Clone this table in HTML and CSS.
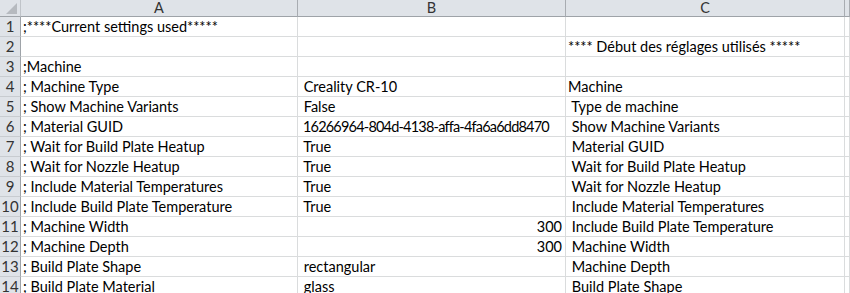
FILE: index.html
```html
<!DOCTYPE html>
<html>
<head>
    <title>Cura settings.xlsx</title>
    <meta charset="utf-8">
    <link rel="stylesheet" href="styles.css">
</head>
<body>
    <div class="sheet">
        <!-- column headers -->
        <div class="corner"><span class="select-all"></span></div>
        <div class="col-head">A</div>
        <div class="col-head">B</div>
        <div class="col-head">C</div>
        <div class="col-head"></div>

        <div class="row-head">1</div>
        <div class="cell">;****Current settings used*****</div>
        <div class="cell"></div>
        <div class="cell"></div>
        <div class="cell"></div>

        <div class="row-head">2</div>
        <div class="cell"></div>
        <div class="cell"></div>
        <div class="cell">**** Début des réglages utilisés *****</div>
        <div class="cell"></div>

        <div class="row-head">3</div>
        <div class="cell">;Machine</div>
        <div class="cell"></div>
        <div class="cell"></div>
        <div class="cell"></div>

        <div class="row-head">4</div>
        <div class="cell">; Machine Type</div>
        <div class="cell"> Creality CR-10</div>
        <div class="cell">Machine</div>
        <div class="cell"></div>

        <div class="row-head">5</div>
        <div class="cell">; Show Machine Variants</div>
        <div class="cell"> False</div>
        <div class="cell"> Type de machine</div>
        <div class="cell"></div>

        <div class="row-head">6</div>
        <div class="cell">; Material GUID</div>
        <div class="cell guid"> 16266964-804d-4138-affa-4fa6a6dd8470</div>
        <div class="cell"> Show Machine Variants</div>
        <div class="cell"></div>

        <div class="row-head">7</div>
        <div class="cell">; Wait for Build Plate Heatup</div>
        <div class="cell"> True</div>
        <div class="cell"> Material GUID</div>
        <div class="cell"></div>

        <div class="row-head">8</div>
        <div class="cell">; Wait for Nozzle Heatup</div>
        <div class="cell"> True</div>
        <div class="cell"> Wait for Build Plate Heatup</div>
        <div class="cell"></div>

        <div class="row-head">9</div>
        <div class="cell">; Include Material Temperatures</div>
        <div class="cell"> True</div>
        <div class="cell"> Wait for Nozzle Heatup</div>
        <div class="cell"></div>

        <div class="row-head">10</div>
        <div class="cell">; Include Build Plate Temperature</div>
        <div class="cell"> True</div>
        <div class="cell"> Include Material Temperatures</div>
        <div class="cell"></div>

        <div class="row-head">11</div>
        <div class="cell">; Machine Width</div>
        <div class="cell num">300</div>
        <div class="cell"> Include Build Plate Temperature</div>
        <div class="cell"></div>

        <div class="row-head">12</div>
        <div class="cell">; Machine Depth</div>
        <div class="cell num">300</div>
        <div class="cell"> Machine Width</div>
        <div class="cell"></div>

        <div class="row-head">13</div>
        <div class="cell">; Build Plate Shape</div>
        <div class="cell"> rectangular</div>
        <div class="cell"> Machine Depth</div>
        <div class="cell"></div>

        <div class="row-head">14</div>
        <div class="cell">; Build Plate Material</div>
        <div class="cell"> glass</div>
        <div class="cell"> Build Plate Shape</div>
        <div class="cell"></div>
    </div>
</body>
</html>
```

FILE: styles.css
```css
html, body {
    height: 100%;
    margin: 0;
    padding: 0;
    overflow: hidden;
    background: #ffffff;
}

.sheet {
    display: grid;
    grid-template-columns: 21px 277px 268px 279px 1fr;
    grid-auto-rows: 20px;
    grid-template-rows: 17px;
    font-family: 'Lato', 'Open Sans', sans-serif;
    font-size: 14.5px;
    color: #000000;
}

.corner, .col-head, .row-head {
    box-sizing: border-box;
    background: #dfe3e8;
    color: #333333;
    border-right: 1px solid #c0c4c9;
    border-bottom: 1px solid #c0c4c9;
}

.corner {
    position: relative;
    border-bottom-color: #9ea3a8;
}

/* grey triangle for select-all */
.select-all {
    position: absolute;
    right: 3px;
    bottom: 2px;
    width: 0;
    height: 0;
    border-left: 11px solid transparent;
    border-bottom: 11px solid #b6babf;
}

.col-head {
    text-align: center;
    line-height: 16px;
    font-size: 14.5px;
    border-bottom-color: #9ea3a8;
    border-right-color: #a8acb1;
}

.row-head {
    text-align: center;
    line-height: 19px;
    font-size: 15px;
    border-right-color: #9ea3a8;
    border-bottom-color: #c8ccd0;
}

.cell {
    box-sizing: border-box;
    border-right: 1px solid #dadcdd;
    border-bottom: 1px solid #dadcdd;
    padding: 0 2px;
    line-height: 19px;
    white-space: pre;
    overflow: visible;
}

/* long hex id: digits run wide in this font */
.guid {
    letter-spacing: -0.8px;
}

.num {
    text-align: right;
    padding-right: 3px;
}
```
